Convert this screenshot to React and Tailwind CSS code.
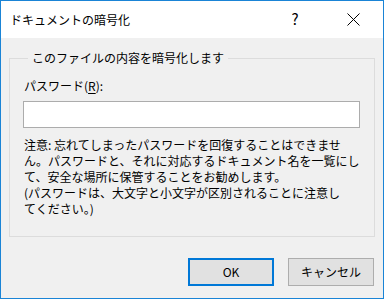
export default function App() {
  const font = { fontFamily: '"Noto Sans CJK JP", "Noto Sans", sans-serif' };
  return (
    <div
      className="w-[384px] h-[299px] border border-[#1a84d6] bg-[#f0f0f0] flex flex-col text-[12px] text-black"
      style={font}
    >
      {/* タイトルバー */}
      <div className="h-[37px] bg-white flex items-center shrink-0">
        <div className="pl-[9px] leading-[16px] flex-1">ドキュメントの暗号化</div>
        <div className="w-[46px] h-full flex items-center justify-center text-[15px] mr-[12px]">?</div>
        <div className="w-[46px] h-full flex items-center justify-center mr-[7px]">
          <svg width="13" height="13" viewBox="0 0 13 13">
            <path d="M0.5 0.5 L12.5 12.5 M12.5 0.5 L0.5 12.5" stroke="#000" strokeWidth="1" />
          </svg>
        </div>
      </div>

      {/* 本文 */}
      <div className="flex-1 flex flex-col pt-[12px]">
        <fieldset className="mx-[8px] border border-[#dcdcdc] pl-[13px] pr-[14px] pb-[19px]">
          <legend className="ml-[5px] px-[4px] leading-[16px]">このファイルの内容を暗号化します</legend>
          <div className="mt-[12px] leading-[16px] pl-[1px]">
            パスワード(<span className="underline underline-offset-2">R</span>):
          </div>
          <div className="mt-[7px] h-[27px] bg-white border border-[#acacac]"></div>
          <div className="mt-[9px] leading-[16px] pl-[1px] whitespace-nowrap">
            注意: 忘れてしまったパスワードを回復することはできませ
            <br />
            ん。パスワードと、それに対応するドキュメント名を一覧にし
            <br />
            て、安全な場所に保管することをお勧めします。
            <br />
            (パスワードは、大文字と小文字が区別されることに注意し
            <br />
            てください。)
          </div>
        </fieldset>

        <div className="flex justify-end gap-[14px] mt-[21px] mr-[9px]">
          <button className="w-[86px] h-[28px] bg-[#e1e1e1] border-2 border-[#0078d7] leading-none">
            OK
          </button>
          <button className="w-[86px] h-[28px] bg-[#e1e1e1] border border-[#adadad] leading-none">
            キャンセル
          </button>
        </div>
      </div>
    </div>
  );
}
